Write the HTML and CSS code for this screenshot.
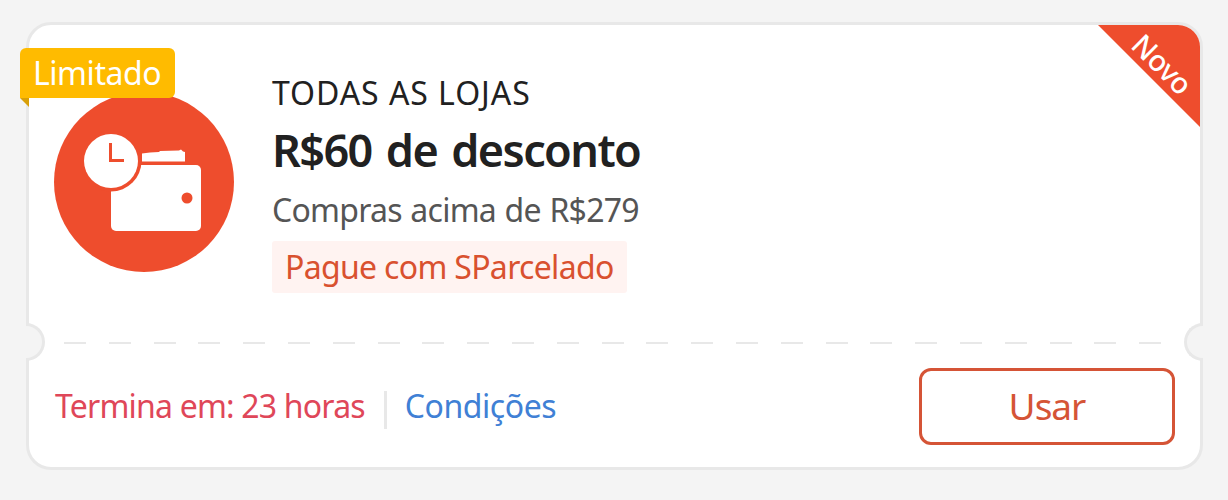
FILE: index.html
```html
<!DOCTYPE html>
<html lang="pt-BR">
<head>
<meta charset="utf-8">
<title>Cupom</title>
<link rel="stylesheet" href="styles.css">
</head>
<body>
<article class="coupon">
  <span class="limited"><span class="limited-text">Limitado</span></span>
  <div class="ribbon"><span class="ribbon-text">Novo</span></div>
  <section class="offer">
    <svg class="logo" viewBox="54 92 180 180" aria-hidden="true">
      <circle cx="144" cy="182" r="90" fill="#ee4d2d"/>
      <path d="M142 153.500L150 152.500L159 152L160 151L179 150.500L181 149.500L183 151.500L185 152V161.500H142Z" fill="#fff"/>
      <rect x="111" y="165" width="90" height="66" rx="5" fill="#fff"/>
      <circle cx="111" cy="161" r="30.500" fill="#ee4d2d"/>
      <circle cx="111" cy="161" r="27" fill="#fff"/>
      <path d="M110.500 143V160.500H124" fill="none" stroke="#ee4d2d" stroke-width="3"/>
      <circle cx="187" cy="198" r="5.500" fill="#ee4d2d"/>
    </svg>
    <div class="details">
      <span class="scope">TODAS AS LOJAS</span>
      <h1 class="title">R$60 de desconto</h1>
      <span class="minimum">Compras acima de R$279</span>
      <span class="tag"><span class="tag-text">Pague com SParcelado</span></span>
    </div>
  </section>
  <div class="perforation"></div>
  <footer class="footer">
    <span class="expiry">Termina em: 23 horas</span>
    <span class="divider"></span>
    <a class="terms">Condições</a>
    <button class="use">Usar</button>
  </footer>
</article>
</body>
</html>
```

FILE: styles.css
```css
*, *::before, *::after { box-sizing: border-box; }
body {
  margin: 0;
  padding: 22px 25px 30px 26px;
  height: 500px;
  background: #f4f4f4;
  font-family: "Noto Sans", sans-serif;
  font-size: 32px;
  white-space: nowrap;
}
.coupon {
  position: relative;
  display: flex;
  flex-direction: column;
  height: 448px;
  border: 3px solid #e8e8e8;
  border-radius: 25px;
  background: #fff;
}
.coupon::before, .coupon::after {
  content: "";
  position: absolute;
  top: 298px;
  width: 19px;
  height: 38px;
  border: 3px solid #e8e8e8;
  background: #f4f4f4;
}
.coupon::before { left: -3px; border-left: 0; border-radius: 0 19px 19px 0; }
.coupon::after { right: -3px; border-right: 0; border-radius: 19px 0 0 19px; }
.limited {
  position: absolute;
  left: -9px;
  top: 23px;
  width: 155px;
  height: 50px;
  padding-left: 13px;
  border-radius: 6px 6px 6px 0;
  background: #ffbb00;
  color: #fff;
  line-height: 50px;
}
.limited::after {
  content: "";
  position: absolute;
  left: 0;
  top: 50px;
  width: 9px;
  height: 9px;
  background: #d89f08;
  clip-path: polygon(0 0, 100% 0, 100% 100%);
}
.limited-text { letter-spacing: -0.45px; }
.ribbon {
  position: absolute;
  right: 0;
  top: 0;
  width: 102px;
  height: 102px;
  display: grid;
  place-items: center;
  padding: 0 0 24px 26px;
  border-radius: 0 22px 0 0;
  background: #ee4d2d;
  clip-path: polygon(0 0, 100% 0, 100% 100%);
}
.ribbon-text { color: #fff; font-size: 29px; font-weight: 500; line-height: 36px; letter-spacing: -0.5px; transform: rotate(45deg); }
.offer {
  display: flex;
  gap: 38px;
  height: 317px;
  padding: 49px 26px 0 25px;
}
.logo { width: 180px; height: 180px; margin-top: 18px; }
.details { display: flex; flex-direction: column; align-items: flex-start; }
.scope { color: #212121; line-height: 38px; letter-spacing: 0.95px; }
.title { margin: 0; color: #212121; font-size: 45px; font-weight: 600; line-height: 76px; letter-spacing: -1.6px; word-spacing: 4px; }
.minimum { color: #555; line-height: 43px; letter-spacing: -0.75px; word-spacing: 1px; }
.tag {
  height: 52px;
  margin-top: 10px;
  padding: 0 13px;
  border-radius: 3px;
  background: #fff3f1;
  color: #d9512f;
  line-height: 52px;
  letter-spacing: -0.68px;
}
.perforation {
  height: 2px;
  margin: 0 37px 0 35px;
  background: repeating-linear-gradient(90deg, #e8e8e8 0 22px, transparent 22px 44.800px);
}
.footer { display: flex; align-items: center; padding: 24px 25px 0 26px; }
.expiry { padding-bottom: 2px; color: #df4759; letter-spacing: -0.8px; }
.divider { width: 3px; height: 38px; margin: 6px 18px 0 19px; background: #e8e8e8; }
.terms { padding-bottom: 2px; color: #4080d5; letter-spacing: -0.45px; }
.use {
  width: 256px;
  height: 77px;
  margin-left: auto;
  padding: 0;
  border: 3px solid #d55436;
  border-radius: 12px;
  background: #fff;
  color: #d55436;
  font: 37px/68px "Noto Sans", sans-serif;
  letter-spacing: -1px;
  padding-bottom: 2px;
}
```
